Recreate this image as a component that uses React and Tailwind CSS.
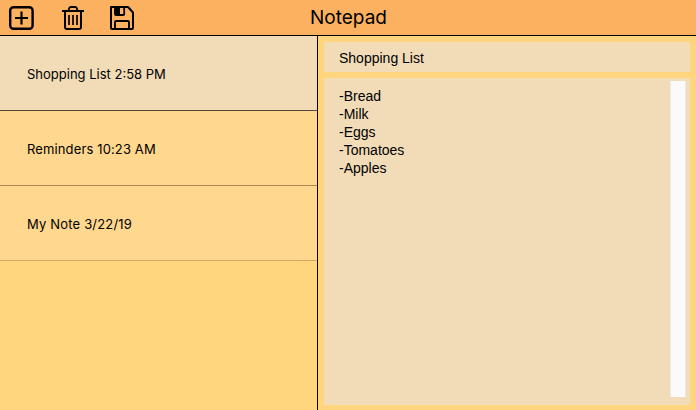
const notes = [
  { id: 1, text: 'Shopping List 2:58 PM', style: 'bg-[#f2dcb7] border-[#56493a]' },
  { id: 2, text: 'Reminders 10:23 AM', style: 'bg-[#ffd78f] border-[#ac8755] tracking-[0.13px]' },
  { id: 3, text: 'My Note 3/22/19', style: 'bg-[#ffd78f] border-[#d5aa64] tracking-[0.18px]' },
];

function AddIcon() {
  return (
    <svg className="h-[26px] w-[26px]" viewBox="0 0 26 26" fill="none" stroke="#000">
      <rect x="2.2" y="2.2" width="22.4" height="21.6" rx="3.4" strokeWidth="2.4" />
      <path d="M13.5 6.5V19.5M7 13H20" strokeWidth="2.2" />
    </svg>
  );
}

function TrashIcon() {
  return (
    <svg className="h-[26px] w-[26px]" viewBox="0 0 26 26" fill="none" stroke="#000">
      <path d="M2 6H24" strokeWidth="2" />
      <path d="M8.5 5.5L9.3 3Q9.7 2 10.8 2H15.2Q16.3 2 16.7 3L17.5 5.5" strokeWidth="1.8" />
      <path d="M5 6V22Q5 24 7 24H19Q21 24 21 22V6" strokeWidth="2" />
      <path d="M9 10V20M13 10V20M17 10V20" strokeWidth="1.7" />
    </svg>
  );
}

function SaveIcon() {
  return (
    <svg className="h-[26px] w-[26px]" viewBox="0 0 26 26" fill="none" stroke="#000">
      <path d="M2 2H19L24 7.5V23Q24 24 23 24H3Q2 24 2 23Z" strokeWidth="2" strokeLinejoin="round" />
      <path d="M6 2V9Q6 10 7 10H14.2Q15.2 10 15.2 9V2" strokeWidth="1.8" />
      <path d="M6 2H11V10H6Z" fill="#000" stroke="none" />
      <path d="M6 24V17Q6 16 7 16H19Q20 16 20 17V24" strokeWidth="1.9" />
    </svg>
  );
}

export default function App() {
  return (
    <div className="flex h-[410px] w-[696px] flex-col overflow-hidden bg-[#ffd57e] text-black">
      <header className="grid h-9 shrink-0 grid-cols-[310px_1fr] items-center border-b border-black bg-[#fbb15f]">
        <div className="flex items-center pl-2 pt-px">
          <button aria-label="Add note"><AddIcon /></button>
          <button aria-label="Delete note" className="ml-[26px]"><TrashIcon /></button>
          <button aria-label="Save note" className="ml-[23px]"><SaveIcon /></button>
        </div>
        <h1 className="whitespace-nowrap font-[Inter,sans-serif] text-[19px] leading-[34px]">Notepad</h1>
      </header>
      <main className="flex min-h-0 flex-1">
        <ul className="w-[318px] shrink-0 border-r border-black">
          {notes.map((note) => (
            <li key={note.id} className={`flex h-[75px] items-center border-b pl-[27px] pt-[3px] font-[Inter,sans-serif] text-[13px] ${note.style}`}>
              {note.text}
            </li>
          ))}
        </ul>
        <section className="flex flex-1 flex-col gap-1.5 px-1.5 pb-[5px] pt-1.5 font-['Liberation_Sans',Arial,sans-serif] text-[14px]">
          <div className="flex h-[30px] shrink-0 items-center bg-[#f2dcb7] pl-[15px] pt-[3px]">Shopping List</div>
          <div className="flex min-h-0 flex-1 justify-between bg-[#f2dcb7] pb-2 pl-[15px] pr-1 pt-[3px]">
            <div className="whitespace-pre-line pt-1.5 leading-[18px]">{'-Bread\n-Milk\n-Eggs\n-Tomatoes\n-Apples'}</div>
            <div className="w-4 border-x border-[#e9e9e9] bg-[#fafafa]" />
          </div>
        </section>
      </main>
    </div>
  );
}
